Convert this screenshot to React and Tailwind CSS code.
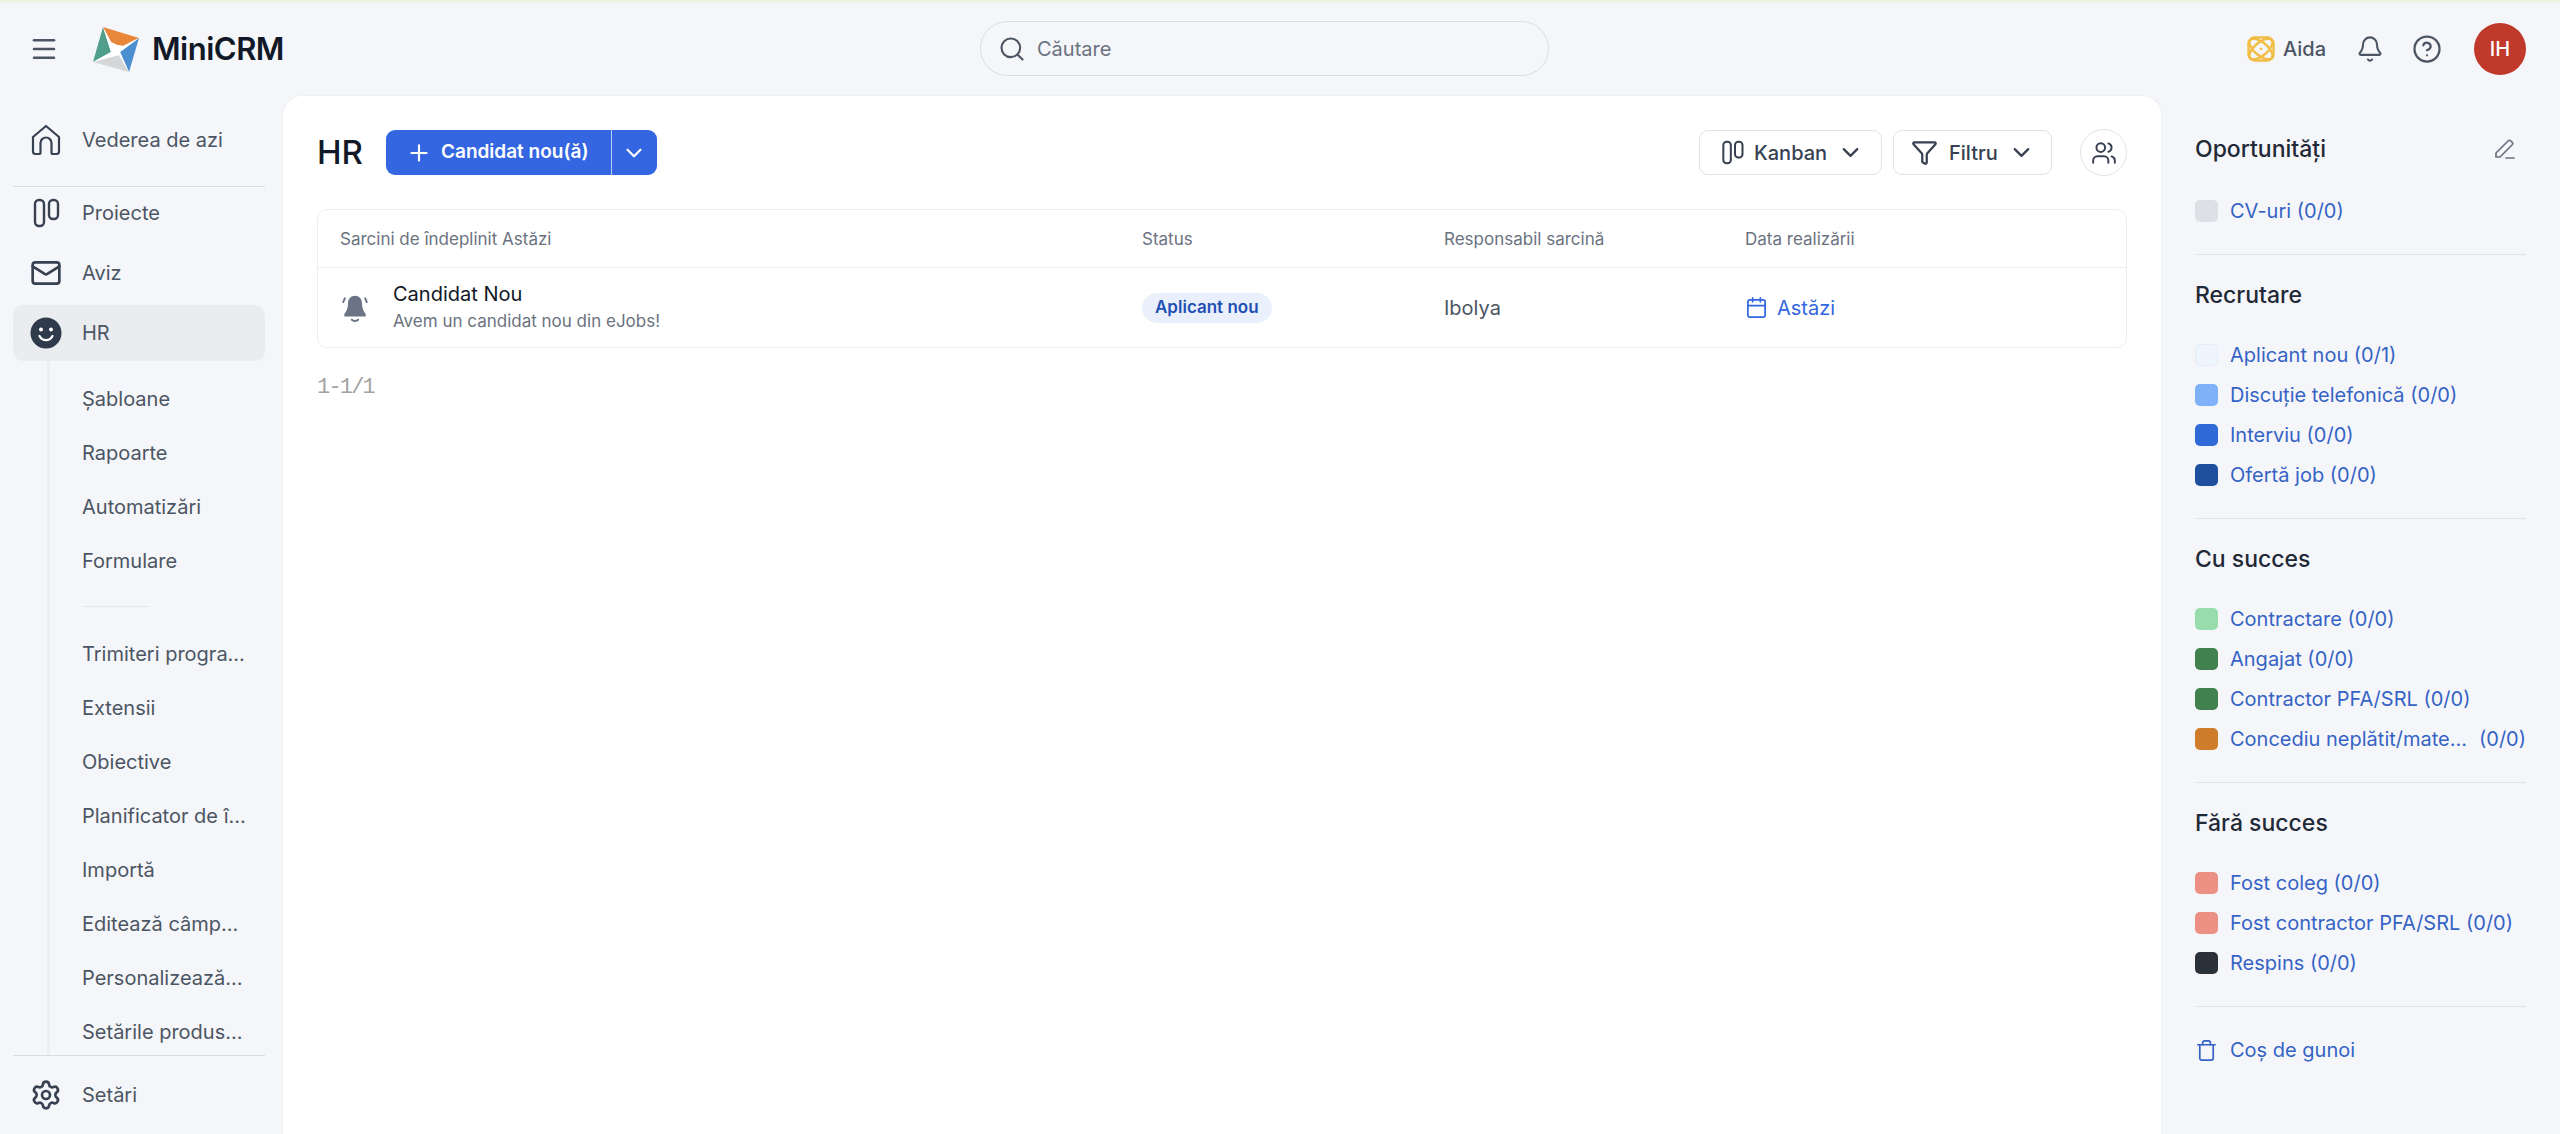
import { Bell, Calendar, ChevronDown, CircleHelp, Funnel, Mail, Menu, Plus, Search, Settings, Trash, Users } from "lucide-react";

const stages = [
  {
    title: "Oportunități",
    items: [{ label: "CV-uri (0/0)", color: "bg-[#dde1e5]" }],
  },
  {
    title: "Recrutare",
    items: [
      { label: "Aplicant nou (0/1)", color: "bg-[#eff5fc] border border-[#e4ecf7]" },
      { label: "Discuție telefonică (0/0)", color: "bg-[#7fb1f8]" },
      { label: "Interviu (0/0)", color: "bg-[#2f6ad6]" },
      { label: "Ofertă job (0/0)", color: "bg-[#1f4f9f]" },
    ],
  },
  {
    title: "Cu succes",
    items: [
      { label: "Contractare (0/0)", color: "bg-[#98dcab]" },
      { label: "Angajat (0/0)", color: "bg-[#41804f]" },
      { label: "Contractor PFA/SRL (0/0)", color: "bg-[#41804f]" },
      { label: "Concediu neplătit/maternitate", count: "(0/0)", color: "bg-[#cf7c2b]" },
    ],
  },
  {
    title: "Fără succes",
    items: [
      { label: "Fost coleg (0/0)", color: "bg-[#eb9082]" },
      { label: "Fost contractor PFA/SRL (0/0)", color: "bg-[#eb9082]" },
      { label: "Respins (0/0)", color: "bg-[#2b3138]" },
    ],
  },
];

const subMenuTop = ["Șabloane", "Rapoarte", "Automatizări", "Formulare"];
const subMenuBottom = [
  "Trimiteri programate",
  "Extensii",
  "Obiective",
  "Planificator de întâlniri",
  "Importă",
  "Editează câmpurile",
  "Personalizează produsul",
  "Setările produsului",
];

function Logo() {
  return (
    <svg width="46" height="45" viewBox="0 0 46 45">
      <polygon points="10,0 0,35 18,25" fill="#4f9f8b" />
      <polygon points="10,0 46,11 30,19 24,18 18,15" fill="#e8873a" />
      <polygon points="46,11 36,45 27,25" fill="#4c8fd0" />
      <polygon points="0,35 36,45 26,28" fill="#d4d6d8" />
      <polygon points="10,0 18,15 24,18 30,19 46,11 27,25 36,45 26,28 0,35 18,25" fill="#ffffff" />
      <circle cx="24" cy="12" r="3.4" fill="#e8873a" />
    </svg>
  );
}

function HomeIcon() {
  return (
    <svg width="30" height="32" viewBox="0 0 30 32" fill="none" stroke="#374151" strokeWidth="2.2" strokeLinejoin="round">
      <path d="M2 13 15 2l13 11v14.500a2.500 2.500 0 0 1-2.500 2.500H22a1.500 1.500 0 0 1-1.500-1.500V19a5.500 5.500 0 0 0-11 0v9.500A1.500 1.500 0 0 1 8 30H4.500A2.500 2.500 0 0 1 2 27.500z" />
    </svg>
  );
}

function KanbanIcon({ size = 30 }) {
  return (
    <svg width={size} height={size} viewBox="0 0 30 30" fill="none" stroke="#374151" strokeWidth="2.4">
      <rect x="4" y="2" width="9" height="26" rx="4" />
      <rect x="18" y="2" width="9" height="19" rx="4" />
    </svg>
  );
}

function SmileIcon() {
  return (
    <svg width="32" height="32" viewBox="0 0 32 32">
      <circle cx="16" cy="16" r="15.5" fill="#2f3a4b" />
      <circle cx="11" cy="12.5" r="2" fill="#fff" />
      <circle cx="21" cy="12.5" r="2" fill="#fff" />
      <path d="M9.5 19c1.5 3 4 4.2 6.500 4.200s5-1.200 6.500-4.200" fill="none" stroke="#fff" strokeWidth="2.200" strokeLinecap="round" />
    </svg>
  );
}

function AidaIcon() {
  return (
    <svg width="28" height="26" viewBox="0 0 28 26" fill="none" stroke="#f2bd44" strokeWidth="2.400">
      <rect x="1.500" y="1.500" width="25" height="23" rx="6" />
      <ellipse cx="14" cy="13" rx="14" ry="6.500" transform="rotate(40 14 13)" />
      <ellipse cx="14" cy="13" rx="14" ry="6.500" transform="rotate(-40 14 13)" />
      <circle cx="14" cy="13" r="1.300" fill="#f2bd44" stroke="none" />
    </svg>
  );
}

function RingingBell() {
  return (
    <svg width="30" height="30" viewBox="0 0 28 28">
      <path d="M14 2.500c-4 0-6.500 3-6.500 7 0 4.500-1.500 8-3.500 10v2.500h20v-2.500c-2-2-3.500-5.500-3.500-10 0-4-2.500-7-6.500-7z" fill="#6b7487" />
      <path d="M11 25c1.500 1.500 4.500 1.500 6 0M4.500 5 3 8.500M23.500 5 25 8.500" fill="none" stroke="#6b7487" strokeWidth="1.800" strokeLinecap="round" />
    </svg>
  );
}

function PenIcon() {
  return (
    <svg width="22" height="22" viewBox="0 0 22 22" fill="none" stroke="#6b7280" strokeWidth="1.700" strokeLinecap="round" strokeLinejoin="round">
      <path d="M2 19v-4L14 3a2.200 2.200 0 0 1 3 0l1 1a2.200 2.200 0 0 1 0 3L6 19z" />
      <path d="M12 20h8" />
    </svg>
  );
}

function NavItem({ icon, label, active }) {
  return (
    <div className={`flex h-[56px] items-center gap-[20px] rounded-[10px] pl-[17px] ${active ? "bg-[#ebecf0]" : ""}`}>
      <span className="flex w-[32px] justify-center">{icon}</span>
      <span className="text-[20px] text-[#4b5563]">{label}</span>
    </div>
  );
}

function SubItem({ label }) {
  return (
    <div className="flex h-[54px] shrink-0 items-center">
      <span className="w-[166px] truncate text-[20px] text-[#4b5563]">{label}</span>
    </div>
  );
}

function Sidebar() {
  return (
    <aside className="flex w-[282px] shrink-0 flex-col pl-[13px] pr-[17px] pt-[15px]">
      <div className="flex h-[60px] items-center gap-[20px] pl-[17px]">
        <span className="flex w-[32px] justify-center">
          <HomeIcon />
        </span>
        <span className="text-[20px] text-[#4b5563]">Vederea de azi</span>
      </div>
      <div className="mt-[16px] h-px bg-[#d9dce1]" />
      <div className="-mt-[2px] flex flex-col gap-1">
        <NavItem icon={<KanbanIcon />} label="Proiecte" />
        <NavItem icon={<Mail size={32} color="#374151" strokeWidth={2} />} label="Aviz" />
        <NavItem icon={<SmileIcon />} label="HR" active />
      </div>
      <div className="ml-[34px] flex min-h-0 flex-1 flex-col overflow-hidden border-l-[3px] border-[#eceef1] pl-[32px] pt-[11px]">
        {subMenuTop.map((label) => (
          <SubItem key={label} label={label} />
        ))}
        <div className="mb-[20px] mt-[18px] h-px w-[68px] shrink-0 bg-[#e5e7eb]" />
        {subMenuBottom.map((label) => (
          <SubItem key={label} label={label} />
        ))}
      </div>
      <div className="flex h-[79px] shrink-0 items-center gap-[20px] border-t border-[#d9dce1] pl-[17px]">
        <span className="flex w-[32px] justify-center">
          <Settings size={32} color="#374151" strokeWidth={2} />
        </span>
        <span className="text-[20px] text-[#4b5563]">Setări</span>
      </div>
    </aside>
  );
}

function Header() {
  return (
    <header className="relative flex h-[95px] shrink-0 items-center justify-between border-t-[3px] border-[#eef2e0] pl-[29px] pr-[34px]">
      <div className="flex items-center">
        <Menu size={30} color="#4b5563" strokeWidth={2} />
        <div className="ml-[34px] flex items-center gap-[13px]">
          <Logo />
          <span className="text-[31px] font-semibold tracking-[-0.5px] text-[#111827]">MiniCRM</span>
        </div>
      </div>
      <div className="absolute left-[980px] top-[18px] flex h-[55px] w-[569px] items-center gap-[11px] rounded-full border border-[#d9dce1] px-[17px]">
        <Search size={28} color="#4b5563" strokeWidth={1.800} />
        <span className="text-[20px] text-[#6b7280]">Căutare</span>
      </div>
      <div className="flex items-center">
        <AidaIcon />
        <span className="ml-[8px] text-[20px] font-medium text-[#4b5563]">Aida</span>
        <Bell className="ml-[30px]" size={28} color="#4b5563" strokeWidth={1.800} />
        <CircleHelp className="ml-[28px]" size={30} color="#4b5563" strokeWidth={1.800} />
        <div className="ml-[32px] flex h-[52px] w-[52px] items-center justify-center rounded-full bg-[#c0392b] text-[20px] font-medium text-white">
          IH
        </div>
      </div>
    </header>
  );
}

function Toolbar() {
  return (
    <div className="flex h-[45px] items-center">
      <h1 className="text-[33px] font-medium text-[#111827]">HR</h1>
      <div className="ml-[23px] flex h-[45px] items-center rounded-[9px] bg-[#3366e0] text-white">
        <div className="flex h-full w-[226px] items-center gap-[9px] border-r border-[#b9ccf5] pl-[20px]">
          <Plus size={26} strokeWidth={2} />
          <span className="text-[19px] font-semibold">Candidat nou(ă)</span>
        </div>
        <div className="flex w-[45px] justify-center">
          <ChevronDown size={26} strokeWidth={2} />
        </div>
      </div>
      <div className="ml-auto flex items-center">
        <div className="flex h-[45px] w-[183px] items-center rounded-[9px] border border-[#dfe2e7] pl-[20px]">
          <KanbanIcon size={25} />
          <span className="ml-[9px] text-[20px] font-medium text-[#374151]">Kanban</span>
          <ChevronDown className="ml-[10px]" size={27} color="#374151" strokeWidth={2} />
        </div>
        <div className="ml-[11px] flex h-[45px] w-[159px] items-center rounded-[9px] border border-[#dfe2e7] pl-[17px]">
          <Funnel size={27} color="#374151" strokeWidth={2} />
          <span className="ml-[11px] text-[20px] font-medium text-[#374151]">Filtru</span>
          <ChevronDown className="ml-[10px]" size={27} color="#374151" strokeWidth={2} />
        </div>
        <div className="ml-[28px] flex h-[47px] w-[47px] items-center justify-center rounded-full border border-[#dfe2e7]">
          <Users size={26} color="#374151" strokeWidth={1.800} />
        </div>
      </div>
    </div>
  );
}

function TaskTable() {
  return (
    <div className="mt-[34px] rounded-[10px] border border-[#eceef1]">
      <div className="grid h-[58px] grid-cols-[802px_302px_301px_1fr] items-center border-b border-[#eceef1] px-[22px] pt-[2px] text-[17px] text-[#6b7280]">
        <span>Sarcini de îndeplinit Astăzi</span>
        <span>Status</span>
        <span>Responsabil sarcină</span>
        <span>Data realizării</span>
      </div>
      <div className="grid h-[79px] grid-cols-[802px_302px_301px_1fr] items-center px-[22px]">
        <div className="flex items-center gap-[23px]">
          <RingingBell />
          <div className="flex flex-col">
            <span className="text-[20px] leading-[27px] text-[#111827]">Candidat Nou</span>
            <span className="text-[17px] leading-[26px] text-[#6b7280]">Avem un candidat nou din eJobs!</span>
          </div>
        </div>
        <div>
          <span className="inline-flex h-[30px] items-center rounded-full bg-[#e9f0fb] px-[13px] text-[17px] font-semibold text-[#1f4fb5]">
            Aplicant nou
          </span>
        </div>
        <span className="text-[20px] text-[#4b5563]">Ibolya</span>
        <div className="flex items-center gap-[9px] text-[#3366e0]">
          <Calendar size={23} strokeWidth={1.800} />
          <span className="text-[20px]">Astăzi</span>
        </div>
      </div>
    </div>
  );
}

function StageSection({ stage, first }) {
  return (
    <section className="mb-[26px] border-b border-[#dfe2e7] pb-[23px]">
      <div className="flex h-[28px] items-center justify-between">
        <h2 className="text-[23px] font-medium text-[#1f2937]">{stage.title}</h2>
        {first && (
          <span className="mr-[10px]">
            <PenIcon />
          </span>
        )}
      </div>
      <ul className={first ? "mt-[28px]" : "mt-[26px]"}>
        {stage.items.map((item) => (
          <li key={item.label} className="flex h-[40px] items-center text-[20px] text-[#3563c5]">
            <span className={`h-[22px] w-[23px] shrink-0 rounded-[5px] ${item.color}`} />
            {item.count ? (
              <>
                <span className="ml-[12px] w-[240px] truncate">{item.label}</span>
                <span className="ml-auto">{item.count}</span>
              </>
            ) : (
              <span className="ml-[12px]">{item.label}</span>
            )}
          </li>
        ))}
      </ul>
    </section>
  );
}

function StagePanel() {
  return (
    <aside className="w-[398px] shrink-0 pl-[33px] pr-[34px] pt-[40px]">
      {stages.map((stage, i) => (
        <StageSection key={stage.title} stage={stage} first={i === 0} />
      ))}
      <div className="-mt-[3px] flex h-[40px] items-center gap-[12px] text-[20px] text-[#3563c5]">
        <Trash className="w-[23px]" size={23} strokeWidth={1.800} />
        <span>Coș de gunoi</span>
      </div>
    </aside>
  );
}

export default function App() {
  return (
    <div className="flex h-screen flex-col overflow-hidden bg-[#f5f6f9] font-['Inter',sans-serif]">
      <Header />
      <div className="flex min-h-0 flex-1">
        <Sidebar />
        <main className="min-w-0 flex-1 rounded-t-[20px] border border-b-0 border-[#eff0f3] bg-white px-[34px] pt-[34px]">
          <Toolbar />
          <TaskTable />
          <p className="mt-[26px] font-['Liberation_Mono',monospace] text-[22px] leading-[28px] tracking-[-1.8px] text-[#a3a3a3]">1-1/1</p>
        </main>
        <StagePanel />
      </div>
    </div>
  );
}
